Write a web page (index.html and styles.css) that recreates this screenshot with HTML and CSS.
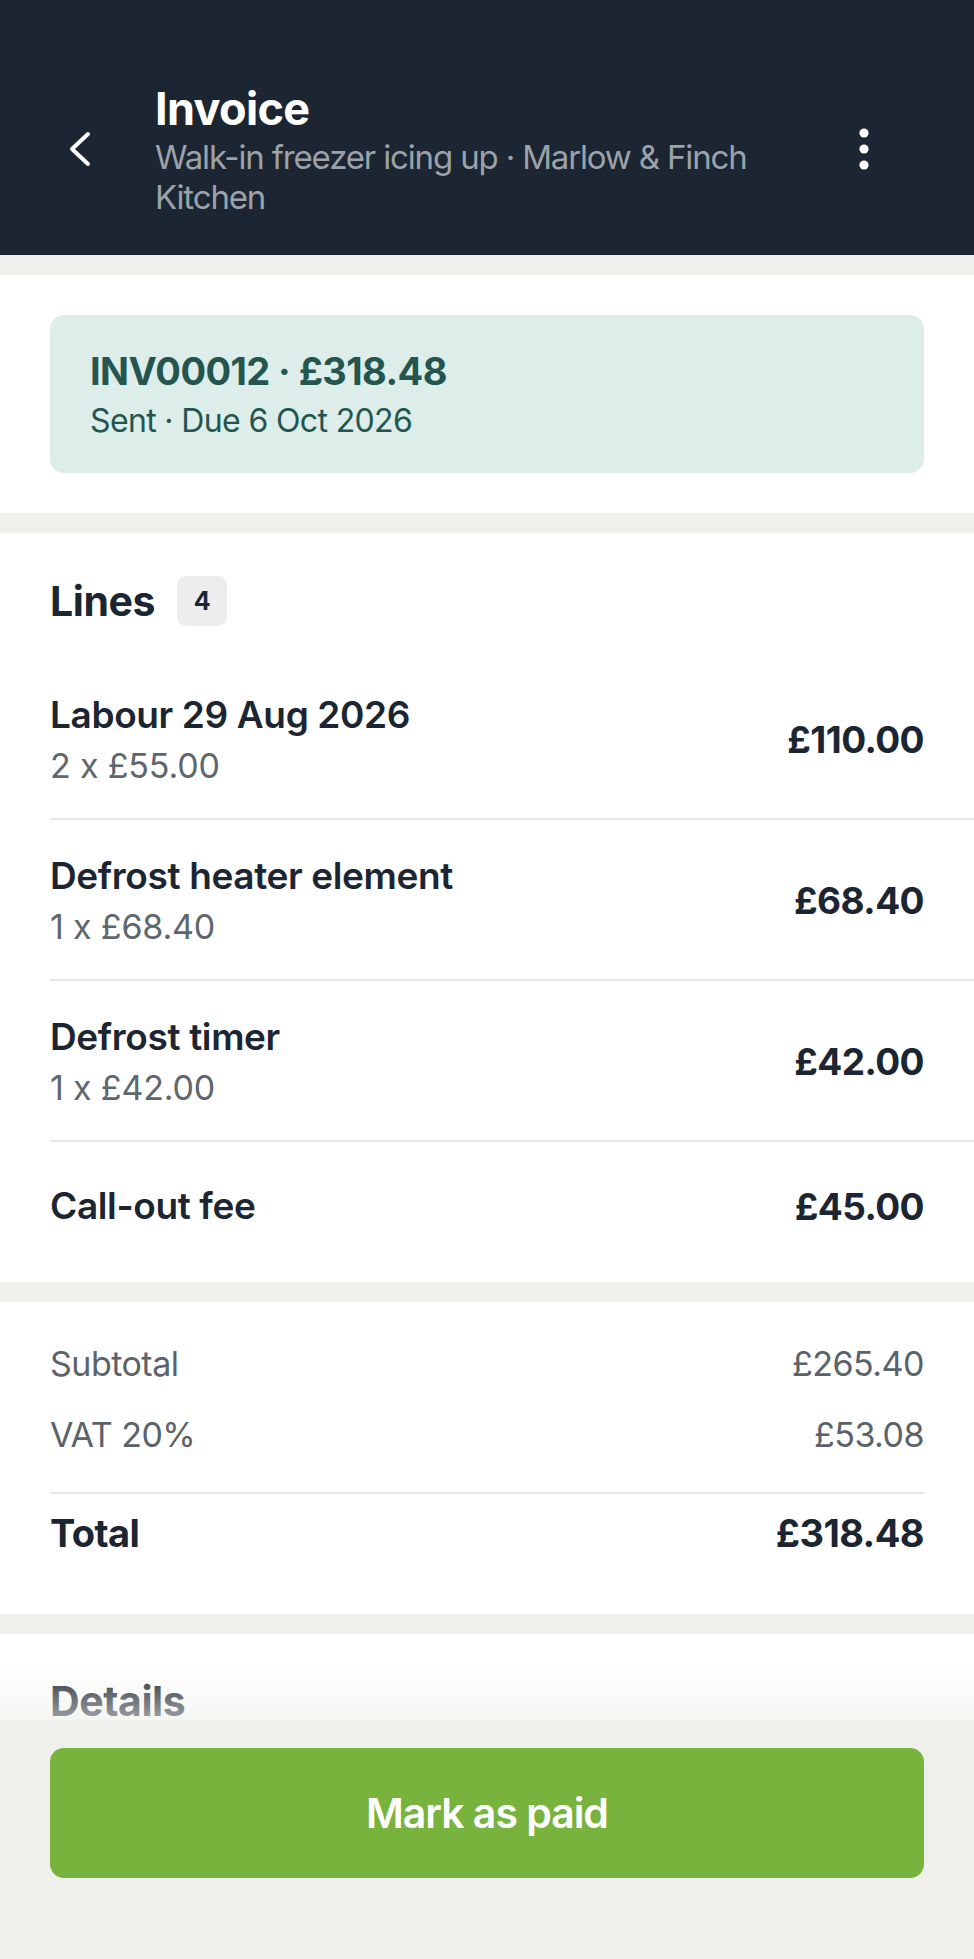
FILE: index.html
```html
<!DOCTYPE html>
<html lang="en">
<head>
  <meta charset="UTF-8">
  <title>Invoice</title>
  <meta name="viewport" content="width=device-width, initial-scale=1.0">
  <link rel="stylesheet" href="styles.css">
</head>
<body>
  <header class="topbar">
    <button class="icon-btn" aria-label="Back">
      <svg width="24" height="36" viewBox="0 0 24 36"><polyline points="20,3 4,18 20,33" fill="none" stroke="#ffffff" stroke-width="4" stroke-linecap="round" stroke-linejoin="round"/></svg>
    </button>
    <div class="topbar-text">
      <h1>Invoice</h1>
      <p>Walk-in freezer icing up · Marlow &amp; Finch Kitchen</p>
    </div>
    <button class="icon-btn" aria-label="More">
      <svg width="12" height="44" viewBox="0 0 12 44"><circle cx="6" cy="6" r="4.6" fill="#ffffff"/><circle cx="6" cy="22" r="4.6" fill="#ffffff"/><circle cx="6" cy="38" r="4.6" fill="#ffffff"/></svg>
    </button>
  </header>

  <main class="content">
    <section class="panel summary">
      <div class="status-card">
        <div class="status-title">INV00012 · £318.48</div>
        <div class="status-sub">Sent · Due 6 Oct 2026</div>
      </div>
    </section>

    <section class="panel lines">
      <div class="panel-head">
        <h2>Lines</h2>
        <span class="count">4</span>
      </div>
      <ul class="line-list">
        <li class="line-item">
          <div class="line-info">
            <div class="line-name">Labour 29 Aug 2026</div>
            <div class="line-qty">2 x £55.00</div>
          </div>
          <div class="line-amount">£110.00</div>
        </li>
        <li class="line-item">
          <div class="line-info">
            <div class="line-name">Defrost heater element</div>
            <div class="line-qty">1 x £68.40</div>
          </div>
          <div class="line-amount">£68.40</div>
        </li>
        <li class="line-item">
          <div class="line-info">
            <div class="line-name">Defrost timer</div>
            <div class="line-qty">1 x £42.00</div>
          </div>
          <div class="line-amount">£42.00</div>
        </li>
        <li class="line-item single">
          <div class="line-info">
            <div class="line-name">Call-out fee</div>
          </div>
          <div class="line-amount">£45.00</div>
        </li>
      </ul>
    </section>

    <section class="panel totals">
      <div class="total-row"><span>Subtotal</span><span>£265.40</span></div>
      <div class="total-row"><span>VAT 20%</span><span>£53.08</span></div>
      <div class="total-row grand"><span>Total</span><span>£318.48</span></div>
    </section>

    <section class="panel details">
      <h2>Details</h2>
    </section>
  </main>

  <div class="action-bar">
    <button class="pay-btn">Mark as paid</button>
  </div>
</body>
</html>
```

FILE: styles.css
```css
body {
  font-family: Inter, 'Noto Sans', sans-serif;
  margin: 0;
  padding: 0;
  background-color: #efefeb;
  color: #1c2532;
  min-height: 100vh;
}

button {
  font-family: inherit;
  border: none;
  background: none;
  padding: 0;
  cursor: pointer;
}

.topbar {
  background-color: #1c2532;
  display: flex;
  align-items: center;
  gap: 35px;
  padding: 81px 70px 38px 40px;
  height: 255px;
  box-sizing: border-box;
}

.icon-btn {
  width: 80px;
  height: 80px;
  display: flex;
  align-items: center;
  justify-content: center;
  flex-shrink: 0;
}

.topbar-text {
  flex: 1;
}

.topbar-text h1 {
  margin: 0;
  color: #ffffff;
  font-size: 45px;
  line-height: 56px;
  font-weight: 700;
  letter-spacing: -0.015em;
}

.topbar-text p {
  margin: 0;
  color: #9ba2a9;
  font-size: 33px;
  line-height: 40px;
  letter-spacing: -0.035em;
}

.content {
  display: flex;
  flex-direction: column;
  gap: 20px;
  padding-top: 20px;
}

.panel {
  background-color: #ffffff;
}

.summary {
  padding: 40px 50px;
}

.status-card {
  background-color: #dcedea;
  border-radius: 14px;
  padding: 31px 40px 30px;
  color: #24554f;
}

.status-title {
  font-size: 38px;
  line-height: 50px;
  font-weight: 700;
  letter-spacing: -0.015em;
}

.status-sub {
  font-size: 32px;
  line-height: 44px;
  margin-top: 3px;
  letter-spacing: -0.02em;
}

.lines {
  padding: 43px 0 12px;
}

.panel-head {
  display: flex;
  align-items: center;
  gap: 22px;
  padding: 0 50px;
  margin-bottom: 33px;
}

h2 {
  margin: 0;
  font-size: 41px;
  line-height: 50px;
  font-weight: 700;
  letter-spacing: -0.01em;
}

.count {
  background-color: #ededed;
  border-radius: 9px;
  width: 50px;
  height: 50px;
  display: flex;
  align-items: center;
  justify-content: center;
  font-size: 25px;
  font-weight: 700;
}

.line-list {
  list-style: none;
  margin: 0;
  padding: 0;
}

.line-item {
  display: flex;
  align-items: center;
  justify-content: space-between;
  margin-left: 50px;
  padding: 32px 50px 30px 0;
  border-bottom: 2px solid #e6e6e6;
}

.line-item.single {
  border-bottom: none;
  padding: 0 50px 0 0;
  min-height: 128px;
}

.line-name {
  font-size: 37px;
  line-height: 48px;
  font-weight: 600;
  letter-spacing: -0.01em;
}

.line-qty {
  font-size: 34px;
  line-height: 44px;
  margin-top: 5px;
  color: #5e666e;
  letter-spacing: -0.005em;
}

.line-amount {
  font-size: 37px;
  font-weight: 700;
  letter-spacing: -0.015em;
}

.totals {
  padding: 40px 50px 57px;
}

.total-row {
  display: flex;
  justify-content: space-between;
  font-size: 34px;
  line-height: 44px;
  color: #5a626a;
  letter-spacing: -0.015em;
}

.total-row + .total-row {
  margin-top: 27px;
}

.total-row.grand {
  margin-top: 35px;
  padding-top: 15px;
  border-top: 2px solid #e6e6e6;
  font-size: 38px;
  line-height: 48px;
  font-weight: 700;
  color: #1c2532;
}

.details {
  padding: 42px 50px 120px;
}

.action-bar {
  position: fixed;
  left: 0;
  right: 0;
  bottom: 0;
  background-color: #efefeb;
  padding: 28px 50px 81px;
}

.action-bar::before {
  content: '';
  position: absolute;
  left: 0;
  right: 0;
  top: -56px;
  height: 56px;
  background: linear-gradient(rgba(239, 239, 235, 0), rgba(239, 239, 235, 0.62));
}

.pay-btn {
  width: 100%;
  height: 130px;
  border-radius: 14px;
  background-color: #78b33e;
  color: #ffffff;
  font-size: 41px;
  font-weight: 600;
  letter-spacing: -0.025em;
}
```
